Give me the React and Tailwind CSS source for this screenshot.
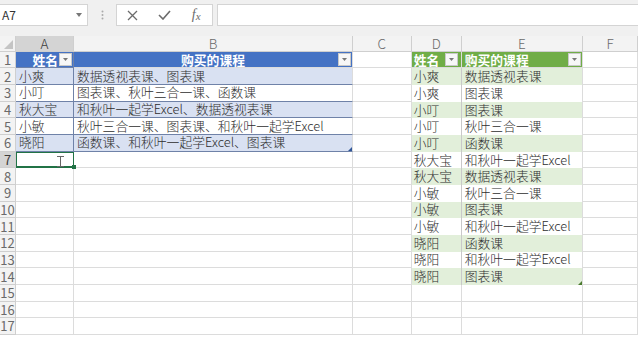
import React from "react";

const font = { fontFamily: '"Noto Sans CJK SC", "Noto Sans", sans-serif' };

const table1 = [
  ["小爽", "数据透视表课、图表课"],
  ["小叮", "图表课、秋叶三合一课、函数课"],
  ["秋大宝", "和秋叶一起学Excel、数据透视表课"],
  ["小敏", "秋叶三合一课、图表课、和秋叶一起学Excel"],
  ["晓阳", "函数课、和秋叶一起学Excel、图表课"],
];

const table2 = [
  ["小爽", "数据透视表课"],
  ["小爽", "图表课"],
  ["小叮", "图表课"],
  ["小叮", "秋叶三合一课"],
  ["小叮", "函数课"],
  ["秋大宝", "和秋叶一起学Excel"],
  ["秋大宝", "数据透视表课"],
  ["小敏", "秋叶三合一课"],
  ["小敏", "图表课"],
  ["小敏", "和秋叶一起学Excel"],
  ["晓阳", "函数课"],
  ["晓阳", "和秋叶一起学Excel"],
  ["晓阳", "图表课"],
];

const FilterBtn = () => (
  <span className="w-[13px] h-[13px] shrink-0 bg-[#f7f7f7] border border-[#c9c9c9] flex items-center justify-center">
    <svg width="5" height="3" viewBox="0 0 5 3">
      <path d="M0 0h5L2.5 3z" fill="#777" />
    </svg>
  </span>
);

const Corner = ({ color }) => (
  <svg width="4" height="4" viewBox="0 0 4 4" className="absolute right-0 bottom-0">
    <path d="M4 0V4H0z" fill={color} />
  </svg>
);

const grid = "border-r border-b border-[#dcdcdc]";
const cellText = "flex items-center px-[3px] text-[12.8px] font-light leading-none text-[#2e2e2e] whitespace-nowrap overflow-visible";

const Cells = ({ r }) => {
  // r: sheet row number 1..17
  const t1 = r >= 2 && r <= 6 ? table1[r - 2] : null;
  const t2 = r >= 2 && r <= 14 ? table2[r - 2] : null;
  const band = r % 2 === 0;
  const selRow = r === 7;

  // column A
  let a;
  if (r === 1) {
    a = (
      <div className="bg-[#4472c4] border-r border-b border-[#6f82a8] flex items-center justify-end gap-[1px] pr-[1px] text-white font-bold text-[12.8px]">
        <span>姓名</span>
        <FilterBtn />
      </div>
    );
  } else if (t1) {
    a = (
      <div className={`${cellText} border-r border-b border-[#6f82a8] ${band ? "bg-[#d9e1f2]" : "bg-white"}`}>
        {t1[0]}
      </div>
    );
  } else if (selRow) {
    a = (
      <div className="relative border border-[#217346] border-b-2">
        <svg width="7" height="11" viewBox="0 0 7 11" className="absolute left-[40px] top-[3px]">
          <path d="M0 .5h7M0 10.5h7M3.5 .5v10" stroke="#666" strokeWidth="1" />
        </svg>
        <span className="absolute right-[-3px] bottom-[-3px] w-[4px] h-[4px] bg-[#217346]" />
      </div>
    );
  } else {
    a = <div className={grid} />;
  }

  // column B
  let b;
  if (r === 1) {
    b = (
      <div className="relative bg-[#4472c4] border-r border-b border-[#dcdcdc] flex items-center justify-center text-white font-bold text-[12.8px]">
        <span>购买的课程</span>
        <span className="absolute right-[1px] top-[1px]">
          <FilterBtn />
        </span>
      </div>
    );
  } else if (t1) {
    b = (
      <div className={`relative ${cellText} border-r border-[#dcdcdc] border-b border-b-[#6f82a8] ${band ? "bg-[#d9e1f2]" : "bg-white"}`}>
        {t1[1]}
        {r === 6 && <Corner color="#2f5597" />}
      </div>
    );
  } else {
    b = <div className={grid} />;
  }

  // column C
  const c = <div className={grid} />;

  // columns D and E
  let d, e;
  if (r === 1) {
    d = (
      <div className="bg-[#70ad47] border-r border-b border-[#dcdcdc] flex items-center justify-between pl-[2px] pr-[3px] text-white font-bold text-[12.8px]">
        <span>姓名</span>
        <FilterBtn />
      </div>
    );
    e = (
      <div className="bg-[#70ad47] border-r border-b border-[#dcdcdc] flex items-center justify-between pl-[3px] pr-[1px] text-white font-bold text-[12.8px]">
        <span>购买的课程</span>
        <FilterBtn />
      </div>
    );
  } else if (t2) {
    const bg = band ? "bg-[#e2efda]" : "bg-white";
    d = <div className={`${cellText} pl-[2px] ${bg} border-r border-[#c9c9c9]`}>{t2[0]}</div>;
    e = (
      <div className={`relative ${cellText} ${bg} border-r border-[#dcdcdc]`}>
        {t2[1]}
        {r === 14 && <Corner color="#4a7a2e" />}
      </div>
    );
  } else {
    d = <div className={grid} />;
    e = <div className={grid} />;
  }

  const f = <div className={grid} />;

  return (
    <>
      <div
        className={`flex items-center justify-center text-[13px] leading-none border-r border-b border-[#cfcfcf] ${
          selRow ? "bg-[#d4d4d4] text-[#3b3b3b]" : "bg-[#f3f3f3] text-[#6a6a6a]"
        }`}
      >
        {r}
      </div>
      {a}
      {b}
      {c}
      {d}
      {e}
      {f}
    </>
  );
};

const App = () => {
  const rows = Array.from({ length: 17 }, (_, i) => i + 1);
  const cols = ["A", "B", "C", "D", "E", "F"];

  return (
    <div className="w-[638px] h-[341px] overflow-hidden bg-white" style={font}>
      {/* formula bar */}
      <div className="h-[36px] bg-[#f0f0f0] flex items-start pt-[4px]">
        <div className="w-[88px] h-[22px] bg-white border-y border-r border-[#d4d4d4] flex items-center justify-between pl-[2px] pr-[5px] text-[12px] text-[#333]">
          <span>A7</span>
          <svg width="6" height="4" viewBox="0 0 6 4">
            <path d="M0 0h6L3 4z" fill="#777" />
          </svg>
        </div>
        <div className="w-[28px] h-[22px] flex items-center justify-center">
          <svg width="3" height="10" viewBox="0 0 3 10">
            <circle cx="1.5" cy="1.5" r="1" fill="#aaa" />
            <circle cx="1.5" cy="5" r="1" fill="#aaa" />
            <circle cx="1.5" cy="8.5" r="1" fill="#aaa" />
          </svg>
        </div>
        <div className="w-[97px] h-[22px] bg-white border border-[#d4d4d4] flex items-center">
          <span className="w-[32px] flex justify-center">
            <svg width="11" height="11" viewBox="0 0 11 11">
              <path d="M1 1l9 9M10 1l-9 9" stroke="#6b6b6b" strokeWidth="1.3" />
            </svg>
          </span>
          <span className="w-[32px] flex justify-center">
            <svg width="13" height="10" viewBox="0 0 13 10">
              <path d="M1 5l4 4 7-8" stroke="#6b6b6b" strokeWidth="1.6" fill="none" />
            </svg>
          </span>
          <span
            className="w-[32px] flex justify-center italic text-[14px] text-[#6b6b6b] leading-none"
            style={{ fontFamily: '"Liberation Serif", serif' }}
          >
            f<span className="text-[11px] mt-[3px]">x</span>
          </span>
        </div>
        <div className="ml-[4px] flex-1 h-[22px] bg-white border-y border-l border-[#d4d4d4]" />
      </div>

      {/* sheet */}
      <div className="grid grid-cols-[16px_58px_279px_58.7px_50px_121.6px_1fr] grid-rows-[15.67px] auto-rows-[16.67px]">
        <div className="relative bg-[#f3f3f3] border-r border-b border-[#cfcfcf]">
          <svg width="9" height="9" viewBox="0 0 9 9" className="absolute right-[2px] bottom-[2px]">
            <path d="M9 0V9H0z" fill="#c4c4c4" />
          </svg>
        </div>
        {cols.map((c) => (
          <div
            key={c}
            className={`flex items-center justify-center text-[13.5px] font-light leading-none border-r border-b border-[#cfcfcf] ${
              c === "A" ? "bg-[#d4d4d4] text-[#3b3b3b]" : "bg-[#f3f3f3] text-[#6a6a6a]"
            }`}
          >
            {c}
          </div>
        ))}
        {rows.map((r) => (
          <Cells key={r} r={r} />
        ))}
      </div>
    </div>
  );
};

export default App;
